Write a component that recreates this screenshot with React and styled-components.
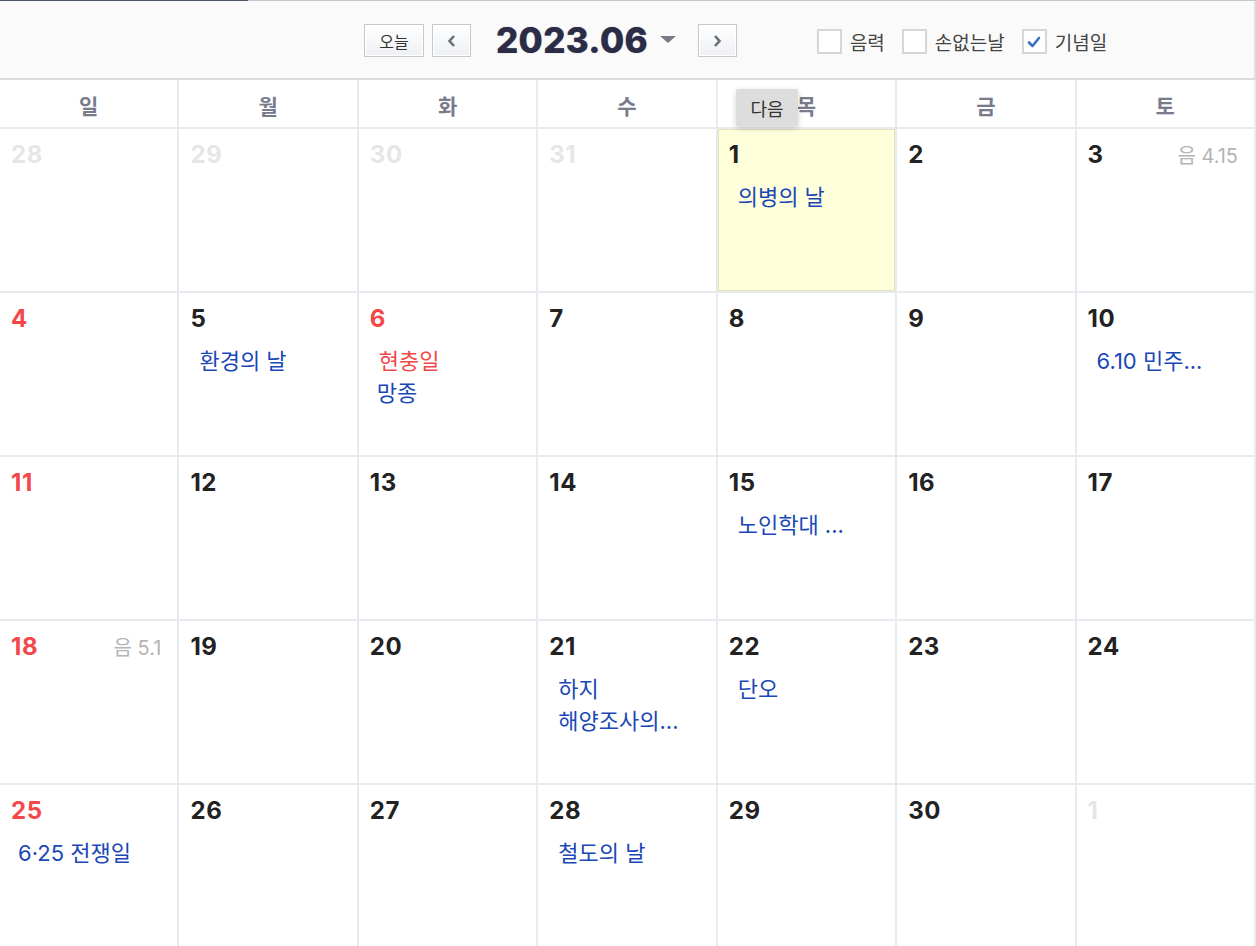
import React from 'react';
import styled, { createGlobalStyle } from 'styled-components';

const GlobalStyle = createGlobalStyle`
    body {
        margin: 0;
        background: #fff;
        font-family: Inter, "Noto Sans CJK KR", sans-serif;
    }
`

const DAY_NAMES = ['일', '월', '화', '수', '목', '금', '토']

// one entry per cell: d = date, other = outside month, red = holiday colour
const WEEKS = [
    [
        { d: 28, other: true }, { d: 29, other: true }, { d: 30, other: true }, { d: 31, other: true },
        { d: 1, today: true, events: [{ t: '의병의 날' }] },
        { d: 2 },
        { d: 3, lunar: '음 4.15' },
    ],
    [
        { d: 4, red: true },
        { d: 5, events: [{ t: '환경의 날' }] },
        { d: 6, red: true, events: [{ t: '현충일', red: true }, { t: '망종', flush: true }] },
        { d: 7 }, { d: 8 }, { d: 9 },
        { d: 10, events: [{ t: '6.10 민주...' }] },
    ],
    [
        { d: 11, red: true }, { d: 12 }, { d: 13 }, { d: 14 },
        { d: 15, events: [{ t: '노인학대 ...' }] },
        { d: 16 }, { d: 17 },
    ],
    [
        { d: 18, red: true, lunar: '음 5.1' }, { d: 19 }, { d: 20 },
        { d: 21, events: [{ t: '하지' }, { t: '해양조사의...' }] },
        { d: 22, events: [{ t: '단오' }] },
        { d: 23 }, { d: 24 },
    ],
    [
        { d: 25, red: true, events: [{ t: '6·25 전쟁일', flush: true }] },
        { d: 26 }, { d: 27 },
        { d: 28, events: [{ t: '철도의 날' }] },
        { d: 29 }, { d: 30 }, { d: 1, other: true },
    ],
]

const Checkbox = ({ checked, label }) => (
    <CheckItem>
        <Box>
            {checked && (
                <svg width="16" height="16" viewBox="0 0 16 16">
                    <path d="M3 8.5 L6.5 12 L13 4" fill="none" stroke="#3a72c2" strokeWidth="2.6" strokeLinecap="round" strokeLinejoin="round" />
                </svg>
            )}
        </Box>
        <span>{label}</span>
    </CheckItem>
)

const App = () => {
    return (
        <Page>
            <GlobalStyle />
            <TopRule>
                <RuleSegment dark width="248px" />
                <RuleSegment />
            </TopRule>
            <Toolbar>
                <NavGroup>
                    <TodayButton>오늘</TodayButton>
                    <ArrowButton>
                        <svg width="12" height="14" viewBox="0 0 12 14">
                            <path d="M8 2 L3.5 7 L8 12" fill="none" stroke="#6b6f78" strokeWidth="2.6" />
                        </svg>
                    </ArrowButton>
                    <MonthTitle>
                        2023.06
                        <Caret />
                    </MonthTitle>
                    <ArrowButton>
                        <svg width="12" height="14" viewBox="0 0 12 14">
                            <path d="M4 2 L8.5 7 L4 12" fill="none" stroke="#6b6f78" strokeWidth="2.6" />
                        </svg>
                    </ArrowButton>
                </NavGroup>
                <Options>
                    <Checkbox label="음력" />
                    <Checkbox label="손없는날" />
                    <Checkbox checked label="기념일" />
                </Options>
            </Toolbar>
            <Grid>
                {DAY_NAMES.map((n) => (
                    <DayName key={n}>{n}</DayName>
                ))}
                {WEEKS.flat().map((c, i) => (
                    <Cell key={i} $today={c.today}>
                        <CellHead>
                            <DateNum $other={c.other} $red={c.red}>{c.d}</DateNum>
                            {c.lunar && <Lunar>{c.lunar}</Lunar>}
                        </CellHead>
                        <Events>
                            {(c.events || []).map((e) => (
                                <Event key={e.t} $red={e.red} $flush={e.flush}>{e.t}</Event>
                            ))}
                        </Events>
                    </Cell>
                ))}
            </Grid>
            <Tooltip>다음</Tooltip>
        </Page>
    )
}

export default App

const Page = styled.div`
    position: relative;
    width: 1256px;
    height: 946px;
    overflow: hidden;
    background: #fff;
`

const TopRule = styled.div`
    display: flex;
    height: 1px;
`

const RuleSegment = styled.div`
    flex: ${(p) => (p.width ? `0 0 ${p.width}` : '1')};
    background: ${(p) => (p.dark ? '#4b5566' : '#c3c7cf')};
`

const Toolbar = styled.div`
    display: flex;
    align-items: center;
    height: 77px;
    padding-left: 364px;
    background: #fafafa;
    border-bottom: 2px solid #dcdcdc;
    border-right: 2px solid #dedede;
`

const NavGroup = styled.div`
    display: flex;
    align-items: center;
`

const ButtonBase = styled.div`
    display: flex;
    align-items: center;
    justify-content: center;
    box-sizing: border-box;
    height: 33px;
    margin-top: 2px;
    border: 1px solid #c4c8cf;
    background: linear-gradient(#ffffff, #eef0f3);
    box-shadow: inset 0 0 0 1px #fff;
`

const TodayButton = styled(ButtonBase)`
    width: 60px;
    font-family: "Noto Sans CJK KR", sans-serif;
    font-size: 16px;
    color: #333;
`

const ArrowButton = styled(ButtonBase)`
    width: 39px;
    margin-left: 8px;
`

const MonthTitle = styled.div`
    display: flex;
    align-items: center;
    margin: 0 14px 0 25px;
    font-family: Inter, sans-serif;
    font-weight: 800;
    font-size: 35px;
    letter-spacing: 0.3px;
    color: #2b2d47;
    text-shadow: 0 0 1px rgba(43, 45, 71, 0.6);
`

const Caret = styled.span`
    margin-left: 12px;
    width: 0;
    height: 0;
    border-left: 8px solid transparent;
    border-right: 8px solid transparent;
    border-top: 7px solid #777b84;
`

const Options = styled.div`
    display: flex;
    align-items: center;
    margin-left: 80px;
    margin-top: 4px;
    gap: 17px;
`

const CheckItem = styled.div`
    display: flex;
    align-items: center;
    gap: 8px;
    font-family: "Noto Sans CJK KR", sans-serif;
    font-size: 19px;
    color: #444;
`

const Box = styled.div`
    display: flex;
    align-items: center;
    justify-content: center;
    box-sizing: border-box;
    width: 25px;
    height: 25px;
    border: 2px solid #d6d6d6;
    background: #fff;
`

const Grid = styled.div`
    display: grid;
    grid-template-columns: repeat(7, 1fr);
    grid-template-rows: 49px repeat(5, 164px);
`

const DayName = styled.div`
    display: flex;
    align-items: center;
    justify-content: center;
    padding-top: 2px;
    border-right: 2px solid #e7eaee;
    border-bottom: 2px solid #e7eaee;
    font-family: "Noto Sans CJK KR", sans-serif;
    font-weight: 700;
    font-size: 21px;
    color: #777b8c;
`

const Cell = styled.div`
    box-sizing: border-box;
    padding: 11px 16px 0 11px;
    border-right: 2px solid #e7eaee;
    border-bottom: 2px solid #e7eaee;
    background: ${(p) => (p.$today ? '#ffffdc' : '#fff')};
    box-shadow: ${(p) => (p.$today ? 'inset 0 0 0 1px #e3e3b6' : 'none')};
    min-width: 0;
`

const CellHead = styled.div`
    display: flex;
    align-items: center;
    justify-content: space-between;
    height: 28px;
`

const DateNum = styled.span`
    font-family: Inter, sans-serif;
    font-weight: 700;
    font-size: 24px;
    letter-spacing: 0.6px;
    color: ${(p) => (p.$other ? '#e6e6e6' : p.$red ? '#f4474a' : '#222')};
`

const Lunar = styled.span`
    font-family: Inter, "Noto Sans CJK KR", sans-serif;
    font-size: 20px;
    color: #b4b4b4;
`

const Events = styled.div`
    display: flex;
    flex-direction: column;
    margin-top: 13px;
`

const Event = styled.div`
    padding-left: ${(p) => (p.$flush ? '7px' : '9px')};
    line-height: 32px;
    font-family: Inter, "Noto Sans CJK KR", sans-serif;
    font-size: 22px;
    white-space: nowrap;
    color: ${(p) => (p.$red ? '#f4474a' : '#1a48b6')};
`

const Tooltip = styled.div`
    position: absolute;
    top: 89px;
    left: 736px;
    width: 62px;
    height: 37px;
    display: flex;
    align-items: center;
    justify-content: center;
    background: #dddddd;
    border-radius: 2px;
    box-shadow: 0 2px 6px rgba(0, 0, 0, 0.18);
    font-family: "Noto Sans CJK KR", sans-serif;
    font-size: 18px;
    color: #333;
`
